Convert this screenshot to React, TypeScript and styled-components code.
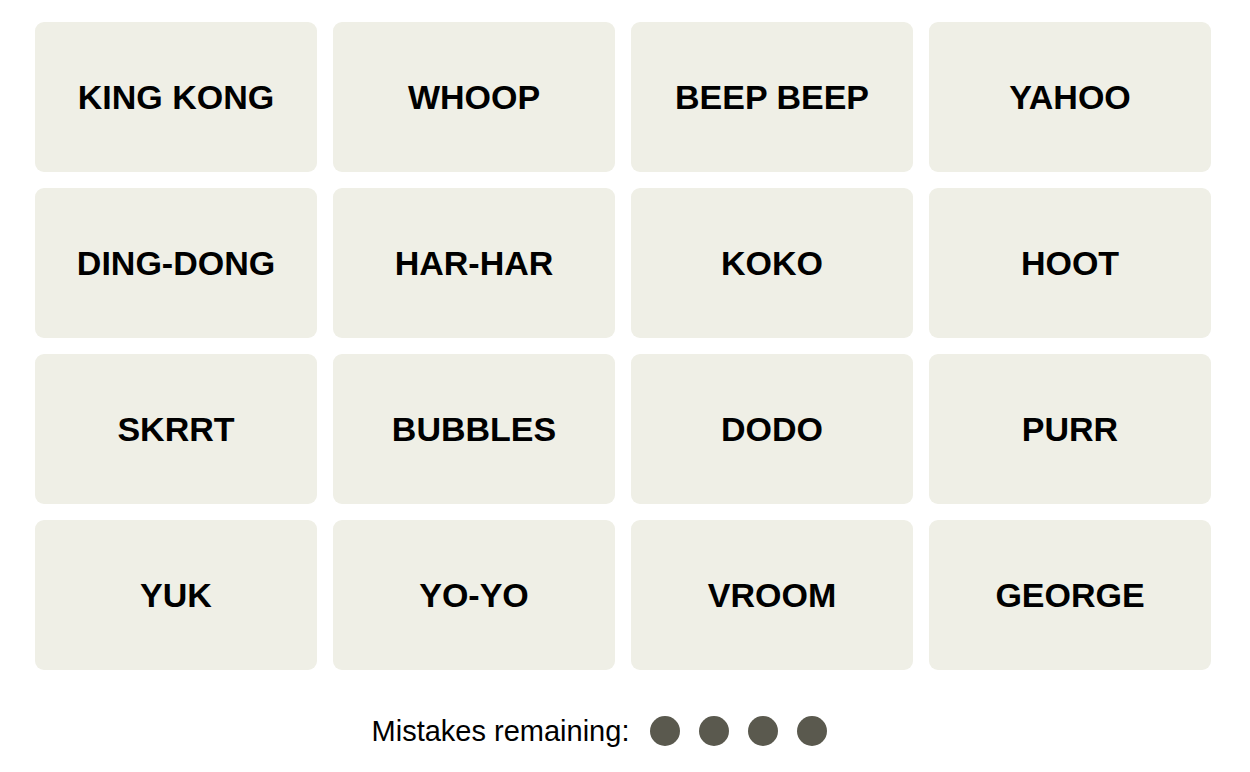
import React from 'react';
import styled, { createGlobalStyle } from 'styled-components';

const GlobalStyle = createGlobalStyle`
  body {
    margin: 0;
    background: #fff;
    font-family: 'Liberation Sans', Arial, sans-serif;
    color: #000;
  }
`;

const Page = styled.main`
  width: 1250px;
  padding: 22px 0 0 35px;
  box-sizing: border-box;
`;

const Board = styled.section`
  display: grid;
  grid-template-columns: repeat(4, 282px);
  grid-auto-rows: 150px;
  gap: 16px;
`;

const Tile = styled.button`
  display: flex;
  align-items: center;
  justify-content: center;
  border: none;
  border-radius: 9px;
  background: #efefe6;
  color: #000;
  font-family: 'Liberation Sans', Arial, sans-serif;
  font-weight: 700;
  font-size: 34px;
  text-transform: uppercase;
  padding: 0;
  cursor: pointer;
`;

const Mistakes = styled.div`
  display: flex;
  align-items: center;
  justify-content: center;
  width: 1177px;
  padding-right: 48px;
  box-sizing: border-box;
  margin-top: 44px;
  gap: 21px;
`;

const MistakesLabel = styled.p`
  margin: 0;
  font-size: 29px;
  line-height: 34px;
`;

const Dots = styled.div`
  display: flex;
  gap: 19px;
`;

const Dot = styled.span<{ $used?: boolean }>`
  width: 30px;
  height: 30px;
  border-radius: 50%;
  background: ${({ $used }) => ($used ? 'transparent' : '#5a594e')};
`;

const words = [
  'King Kong', 'Whoop', 'Beep Beep', 'Yahoo',
  'Ding-Dong', 'Har-Har', 'Koko', 'Hoot',
  'Skrrt', 'Bubbles', 'Dodo', 'Purr',
  'Yuk', 'Yo-Yo', 'Vroom', 'George',
];

function App() {
  return (
    <>
      <GlobalStyle />
      <Page>
        <Board>
          {words.map((word) => (
            <Tile key={word}>{word}</Tile>
          ))}
        </Board>
        <Mistakes>
          <MistakesLabel>Mistakes remaining:</MistakesLabel>
          <Dots>
            {[0, 1, 2, 3].map((i) => (
              <Dot key={i} />
            ))}
          </Dots>
        </Mistakes>
      </Page>
    </>
  );
}

export default App;
